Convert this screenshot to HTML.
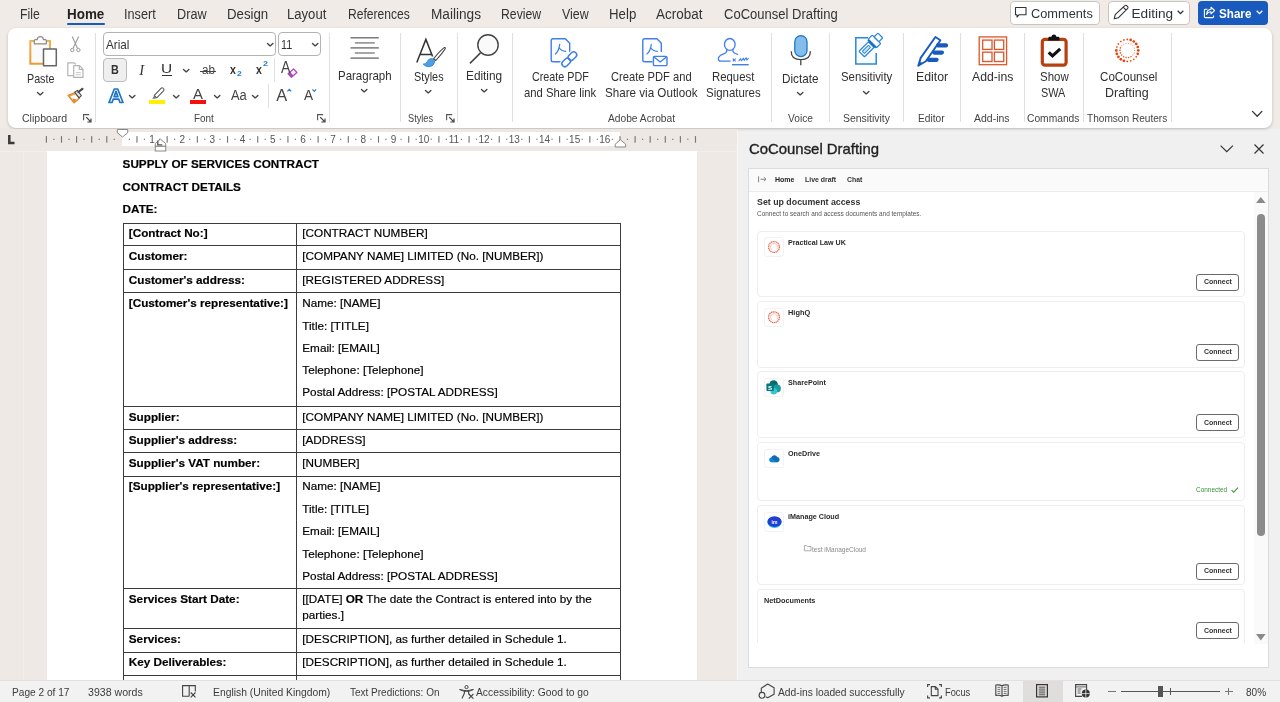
<!DOCTYPE html><html lang="en"><head><meta charset="utf-8"><title>Word - CoCounsel Drafting</title><style>
*{box-sizing:border-box;margin:0;padding:0}
html,body{width:1280px;height:702px;overflow:hidden;background:#f1ebe7;font-family:"Liberation Sans",sans-serif}
#app{position:relative;width:1280px;height:702px;overflow:hidden;will-change:transform}
.t{position:absolute;line-height:20px;height:20px;white-space:nowrap;transform-origin:0 50%;font-family:"Liberation Sans",sans-serif}
.a{position:absolute}
svg{position:absolute;overflow:visible}
.d{position:absolute;white-space:nowrap;font-family:"Liberation Sans",sans-serif;font-size:11.73px;line-height:14px;color:#000;-webkit-text-stroke:0.18px #000}
.b{font-weight:700}
</style></head><body><div id="app">
<div class="a" style="left:0;top:128px;width:738px;height:552px;background:#eee9e4"></div>
<div class="a" style="left:23px;top:128px;width:1px;height:552px;background:#f2eeea"></div>
<div class="a" style="left:47px;top:151.600px;width:649.700px;height:528.400px;background:#fff"></div>
<div class="a" style="left:737px;top:128.500px;width:543px;height:551.500px;background:#f0f0f0;border-left:1px solid #f8f7f6"></div>
<div class="a" style="left:8px;top:28px;width:1264px;height:100px;background:#fff;border-radius:8px;box-shadow:0 1px 3px rgba(0,0,0,.22)"></div>
<div class="a" style="left:0;top:680px;width:1280px;height:22px;background:#f3f2f2;border-top:1px solid #e3e0de"></div>
<div class="a" style="left:67px;top:22.800px;width:38px;height:2.200px;background:#185abd;border-radius:1px"></div>
<div class="a" style="left:1009.5px;top:0.5px;width:90px;height:24px;background:#fff;border:1px solid #c8c6c4;border-radius:4px"></div>
<div class="a" style="left:1107.5px;top:0.5px;width:82px;height:24px;background:#fff;border:1px solid #c8c6c4;border-radius:4px"></div>
<div class="a" style="left:1198px;top:0.5px;width:70px;height:24px;background:#185abd;border-radius:4px"></div>
<svg style="left:1014px;top:6px" width="14" height="13" viewBox="0 0 14 13"><path d="M1.5 1.5h10.5v7.2H5.2L3 11V8.7H1.5z" fill="none" stroke="#333" stroke-width="1.1" stroke-linejoin="round"/></svg>
<svg style="left:1112px;top:4px" width="18" height="17" viewBox="0 0 18 17"><path d="M2.2 14.8l1-4.2L12.6 1.8a1.6 1.6 0 0 1 2.3 0l.6.6a1.6 1.6 0 0 1 0 2.3L6.3 13.8z M11.2 3.2l2.9 2.9" fill="none" stroke="#333" stroke-width="1.1" stroke-linejoin="round"/></svg>
<svg style="left:1176.5px;top:10px" width="7" height="5" viewBox="0 0 7 5"><path d="M.7.8L3.5 3.6 6.3.8" fill="none" stroke="#333" stroke-width="1.3"/></svg>
<svg style="left:1203px;top:6px" width="13" height="13" viewBox="0 0 13 13"><path d="M4.5 3.2H2.3a.9.9 0 0 0-.9.9v6.6c0 .5.4.9.9.9h7.4c.5 0 .9-.4.9-.9V9.4M8 1.2l3.6 3.3L8 7.8V5.7C5.6 5.7 4.5 6.6 3.6 8.4 3.8 5.4 5.300 3.500 8 3.300z" fill="none" stroke="#fff" stroke-width="1.1" stroke-linejoin="round"/></svg>
<svg style="left:1255.5px;top:10px" width="7" height="5" viewBox="0 0 7 5"><path d="M.7.8L3.5 3.6 6.3.8" fill="none" stroke="#fff" stroke-width="1.3"/></svg>
<div class="a" style="left:94.5px;top:33px;width:1px;height:88.6px;background:#e2dfdd"></div>
<div class="a" style="left:328.5px;top:33px;width:1px;height:88.6px;background:#e2dfdd"></div>
<div class="a" style="left:400.2px;top:33px;width:1px;height:88.6px;background:#e2dfdd"></div>
<div class="a" style="left:457.0px;top:33px;width:1px;height:88.6px;background:#e2dfdd"></div>
<div class="a" style="left:511.9px;top:33px;width:1px;height:88.6px;background:#e2dfdd"></div>
<div class="a" style="left:771.1px;top:33px;width:1px;height:88.6px;background:#e2dfdd"></div>
<div class="a" style="left:829.0px;top:33px;width:1px;height:88.6px;background:#e2dfdd"></div>
<div class="a" style="left:902.8px;top:33px;width:1px;height:88.6px;background:#e2dfdd"></div>
<div class="a" style="left:960.3px;top:33px;width:1px;height:88.6px;background:#e2dfdd"></div>
<div class="a" style="left:1023.8px;top:33px;width:1px;height:88.6px;background:#e2dfdd"></div>
<div class="a" style="left:1083.1px;top:33px;width:1px;height:88.6px;background:#e2dfdd"></div>
<div class="a" style="left:1170.9px;top:33px;width:1px;height:88.6px;background:#e2dfdd"></div>
<div class="a" style="left:273.5px;top:58px;width:1px;height:23.599999999999994px;background:#e2dfdd"></div>
<div class="a" style="left:268.2px;top:84px;width:1px;height:23.5px;background:#e2dfdd"></div>
<svg style="left:83px;top:114px" width="9" height="9" viewBox="0 0 9 9"><path d="M0.6 6.2V0.6H6.2" fill="none" stroke="#555" stroke-width="1.1"/><path d="M3.2 3.2L8 8M8 4.4V8H4.4" fill="none" stroke="#444" stroke-width="1.2"/></svg>
<svg style="left:317px;top:114px" width="9" height="9" viewBox="0 0 9 9"><path d="M0.6 6.2V0.6H6.2" fill="none" stroke="#555" stroke-width="1.1"/><path d="M3.2 3.2L8 8M8 4.4V8H4.4" fill="none" stroke="#444" stroke-width="1.2"/></svg>
<svg style="left:446px;top:114px" width="9" height="9" viewBox="0 0 9 9"><path d="M0.6 6.2V0.6H6.2" fill="none" stroke="#555" stroke-width="1.1"/><path d="M3.2 3.2L8 8M8 4.4V8H4.4" fill="none" stroke="#444" stroke-width="1.2"/></svg>
<svg style="left:36.80px;top:92.00px" width="6.4" height="3.4" viewBox="0 0 6.4 3.4"><path d="M0.5 0.4L3.2 2.9L5.9 0.4" fill="none" stroke="#444" stroke-width="1.4" stroke-linejoin="round" stroke-linecap="round"/></svg>
<svg style="left:361.00px;top:88.60px" width="6.4" height="3.4" viewBox="0 0 6.4 3.4"><path d="M0.5 0.4L3.2 2.9L5.9 0.4" fill="none" stroke="#444" stroke-width="1.4" stroke-linejoin="round" stroke-linecap="round"/></svg>
<svg style="left:425.40px;top:90.30px" width="6.4" height="3.4" viewBox="0 0 6.4 3.4"><path d="M0.5 0.4L3.2 2.9L5.9 0.4" fill="none" stroke="#444" stroke-width="1.4" stroke-linejoin="round" stroke-linecap="round"/></svg>
<svg style="left:480.80px;top:88.60px" width="6.4" height="3.4" viewBox="0 0 6.4 3.4"><path d="M0.5 0.4L3.2 2.9L5.9 0.4" fill="none" stroke="#444" stroke-width="1.4" stroke-linejoin="round" stroke-linecap="round"/></svg>
<svg style="left:797.10px;top:92.00px" width="6.4" height="3.4" viewBox="0 0 6.4 3.4"><path d="M0.5 0.4L3.2 2.9L5.9 0.4" fill="none" stroke="#444" stroke-width="1.4" stroke-linejoin="round" stroke-linecap="round"/></svg>
<svg style="left:862.80px;top:90.90px" width="6.4" height="3.4" viewBox="0 0 6.4 3.4"><path d="M0.5 0.4L3.2 2.9L5.9 0.4" fill="none" stroke="#444" stroke-width="1.4" stroke-linejoin="round" stroke-linecap="round"/></svg>
<svg style="left:1252.30px;top:111.40px" width="10.4" height="5.8" viewBox="0 0 10.4 5.8"><path d="M0.5 0.4L5.2 5.3L9.9 0.4" fill="none" stroke="#333" stroke-width="1.3" stroke-linejoin="round" stroke-linecap="round"/></svg>
<div class="a" style="left:103px;top:32.3px;width:172.5px;height:23.5px;background:#fff;border:1px solid #b5b3b1;border-radius:4px"></div>
<div class="a" style="left:278px;top:32.3px;width:43px;height:23.5px;background:#fff;border:1px solid #b5b3b1;border-radius:4px"></div>
<svg style="left:266.80px;top:42.80px" width="6.4" height="3.4" viewBox="0 0 6.4 3.4"><path d="M0.5 0.4L3.2 2.9L5.9 0.4" fill="none" stroke="#444" stroke-width="1.4" stroke-linejoin="round" stroke-linecap="round"/></svg>
<svg style="left:312.20px;top:42.80px" width="6.4" height="3.4" viewBox="0 0 6.4 3.4"><path d="M0.5 0.4L3.2 2.9L5.9 0.4" fill="none" stroke="#444" stroke-width="1.4" stroke-linejoin="round" stroke-linecap="round"/></svg>
<div class="a" style="left:103px;top:58px;width:24.3px;height:23.6px;background:#efefef;border:1px solid #bdbbb9;border-radius:4px"></div>
<div class="a" style="left:162px;top:75px;width:9.5px;height:1.1px;background:#333"></div>
<svg style="left:182.80px;top:68.60px" width="6.4" height="3.4" viewBox="0 0 6.4 3.4"><path d="M0.5 0.4L3.2 2.9L5.9 0.4" fill="none" stroke="#444" stroke-width="1.4" stroke-linejoin="round" stroke-linecap="round"/></svg>
<div class="a" style="left:200px;top:70.6px;width:15.8px;height:1.1px;background:#444"></div>
<svg style="left:287px;top:68.300px" width="11" height="9.900" viewBox="0 0 10 9"><path d="M1 5.2L6 .8l3 3.300L4 8.400z" fill="#fff" stroke="#b146c2" stroke-width="1.2" stroke-linejoin="round"/><path d="M1 5.2l3 3.200 1.800-1.600-3-3.300z" fill="#b146c2"/></svg>
<svg style="left:107.5px;top:88px" width="16" height="15" viewBox="0 0 16 15"><path d="M6.300 1h3.400l5.300 13.500h-3l-1.200-3.300H5.200L4 14.500H1z M6.100 8.700h3.800L8 3.400z" fill="#fff" stroke="#1b73c8" stroke-width="1.7" stroke-linejoin="round" fill-rule="evenodd"/></svg>
<svg style="left:128.80px;top:94.60px" width="6.4" height="3.4" viewBox="0 0 6.4 3.4"><path d="M0.5 0.4L3.2 2.9L5.9 0.4" fill="none" stroke="#444" stroke-width="1.4" stroke-linejoin="round" stroke-linecap="round"/></svg>
<div class="a" style="left:149px;top:100px;width:16.4px;height:4px;background:#ffef00"></div>
<svg style="left:150px;top:87px" width="16" height="13" viewBox="0 0 16 13"><path d="M4.300 8.300L11 1.300a1.500 1.500 0 0 1 2.200 0l.3.300a1.500 1.500 0 0 1 0 2.200L6.800 10.800z" fill="#fff" stroke="#555" stroke-width="1.1"/><path d="M4.300 8.300l2.500 2.500-1.800 1H2.300z" fill="#777"/></svg>
<svg style="left:172.80px;top:94.60px" width="6.4" height="3.4" viewBox="0 0 6.4 3.4"><path d="M0.5 0.4L3.2 2.9L5.9 0.4" fill="none" stroke="#444" stroke-width="1.4" stroke-linejoin="round" stroke-linecap="round"/></svg>
<div class="a" style="left:190px;top:100px;width:16.4px;height:4px;background:#f5100f"></div>
<svg style="left:213.50px;top:94.60px" width="6.4" height="3.4" viewBox="0 0 6.4 3.4"><path d="M0.5 0.4L3.2 2.9L5.9 0.4" fill="none" stroke="#444" stroke-width="1.4" stroke-linejoin="round" stroke-linecap="round"/></svg>
<svg style="left:252.20px;top:94.60px" width="6.4" height="3.4" viewBox="0 0 6.4 3.4"><path d="M0.5 0.4L3.2 2.9L5.9 0.4" fill="none" stroke="#444" stroke-width="1.4" stroke-linejoin="round" stroke-linecap="round"/></svg>
<svg style="left:286.7px;top:88.8px" width="4.600" height="2.800" viewBox="0 0 4.600 2.800"><path d="M.4 2.400l1.900-2 1.900 2" fill="none" stroke="#2b7cd3" stroke-width="1.200"/></svg>
<svg style="left:312.2px;top:88.8px" width="4.600" height="2.800" viewBox="0 0 4.600 2.800"><path d="M.4.400l1.900 2 1.900-2" fill="none" stroke="#2b7cd3" stroke-width="1.2"/></svg>
<svg style="left:0;top:0" width="1280" height="130" viewBox="0 0 1280 130"><defs><linearGradient id="og" x1="0" y1="0" x2="0" y2="1"><stop offset="0" stop-color="#f6b04c"/><stop offset="1" stop-color="#ee9a33"/></linearGradient></defs><path d="M30.300 41h19.700v22.800H30.300z" fill="#fafafa" stroke="url(#og)" stroke-width="2" /><path d="M34.300 43.800v-3.200q0-.900.900-.900h1.900q.4-3 3.200-3t3.200 3h1.900q.9 0 .9.900v3.200z" fill="#fcfcfc" stroke="#8a8a8a" stroke-width="1.2" stroke-linejoin="round"/><path d="M43.500 49h12.800v16.800H43.500z" fill="#fff" stroke="#666" stroke-width="1.5" stroke-linejoin="round"/><path d="M72.200 36.500L77.600 48.400M78.700 36.500L73 48.400" fill="none" stroke="#9a9a9a" stroke-width="1.1" /><circle cx="72.300" cy="50" r="1.700" fill="none" stroke="#9a9a9a" stroke-width="1"/><circle cx="78.400" cy="50" r="1.700" fill="none" stroke="#9a9a9a" stroke-width="1"/><path d="M73.400 75.600H67.800V62.800h6.600l1.500 1.500" fill="none" stroke="#b4b4b4" stroke-width="1.2" stroke-linejoin="round"/><path d="M73.700 65.600h5.800l3.500 3.500v8.300h-9.300z M79.300 65.800v3.500h3.500" fill="#fff" stroke="#b4b4b4" stroke-width="1.2" stroke-linejoin="round"/><path d="M75.800 72.600h5M75.800 74.700h5" fill="none" stroke="#c2c2c2" stroke-width="0.9" /><path d="M68.100 95.300l7-2.600 4.100 5.500-5.100 4.500z" fill="#fff" stroke="#e8821e" stroke-width="1.4" stroke-linejoin="round"/><path d="M68.100 95.300l7-2.600.9 1.200-6.400 2.900z" fill="#f09a3a" stroke="none" stroke-width="1.2" /><path d="M72.300 98.600l4.300 1-2.500 2.500z" fill="#e8821e" stroke="none" stroke-width="1.2" /><path d="M74.600 92.200l2.800-1.800 3.900 5.200-2.200 2.200z" fill="#ececec" stroke="#4a4a4a" stroke-width="1.1" stroke-linejoin="round"/><path d="M78.400 92l4-3.200" fill="none" stroke="#4a4a4a" stroke-width="2.2" stroke-linecap="round"/><path d="M350.500 37.8h28.300" fill="none" stroke="#666" stroke-width="1.3" /><path d="M354.800 42.9h20" fill="none" stroke="#777" stroke-width="1.3" /><path d="M350.500 47.9h28.300" fill="none" stroke="#666" stroke-width="1.3" /><path d="M354.800 53h20" fill="none" stroke="#777" stroke-width="1.3" /><path d="M350.500 58.1h28.300" fill="none" stroke="#666" stroke-width="1.3" /><path d="M416.800 62.600L425.900 39.400L432.600 56.400M420 54.600h11.800" fill="none" stroke="#333" stroke-width="1.5" stroke-linejoin="miter"/><path d="M433.600 58.600q7.500-9 10.600-11 1.300-.5 1.100.9-2 3.600-9.500 12z" fill="#fff" stroke="#444" stroke-width="1.1" stroke-linejoin="round"/><path d="M423.100 64.100q3.200.3 4.200-2.600 1.200-3 4.500-2.900 2.900.5 2.800 3.500-.7 4.200-5.400 4.600-3.500.3-6.100-2.600z" fill="#4e9fe3" stroke="#2b88d8" stroke-width="0.9" /><circle cx="488" cy="45" r="10.200" fill="#fafafa" stroke="#444" stroke-width="1.400"/><path d="M480.500 52.900L469.900 63.400" fill="none" stroke="#444" stroke-width="1.5" /><path d="M553 38.700h12.400l4.300 4.600v8.200M561 61.700H553q-1.800 0-1.800-1.800V40.500q0-1.800 1.800-1.800" fill="none" stroke="#3e7fe8" stroke-width="1.4" stroke-linejoin="round" stroke-linecap="round"/><path d="M555.3 54q3.400-2.400 4.400-9.600M559 47.500q2.200 3.700 6.800 3.800" fill="none" stroke="#3e7fe8" stroke-width="1.2" stroke-linecap="round"/><g transform="rotate(-45 569.300 59.300)" fill="none"><rect x="560.100" y="56.300" width="9.600" height="6" rx="3" stroke="#fff" stroke-width="4"/><rect x="568.900" y="56.300" width="9.600" height="6" rx="3" stroke="#fff" stroke-width="4"/><rect x="560.100" y="56.300" width="9.600" height="6" rx="3" stroke="#3e7fe8" stroke-width="1.500"/><rect x="568.900" y="56.300" width="9.600" height="6" rx="3" stroke="#3e7fe8" stroke-width="1.500"/></g><path d="M644.6 38.700h12.400l4.300 4.600v8.200M652.6 61.700H644.6q-1.800 0-1.800-1.800V40.500q0-1.800 1.800-1.800" fill="none" stroke="#3e7fe8" stroke-width="1.4" stroke-linejoin="round" stroke-linecap="round"/><path d="M646.9 54q3.400-2.400 4.400-9.600M650.6 47.500q2.200 3.700 6.800 3.800" fill="none" stroke="#3e7fe8" stroke-width="1.2" stroke-linecap="round"/><rect x="652.400" y="55.400" width="15.600" height="11.200" rx="1.600" fill="#fff"/><rect x="653.400" y="56.400" width="13.600" height="9.200" rx="1.200" fill="#fff" stroke="#3e7fe8" stroke-width="1.400"/><path d="M654 57l6.200 5 6.200-5" fill="none" stroke="#3e7fe8" stroke-width="1.3" stroke-linejoin="round"/><ellipse cx="729.800" cy="44.400" rx="5.300" ry="5.900" fill="none" stroke="#3e7fe8" stroke-width="1.300"/><path d="M726.800 49.400q.6 3.300-3.600 4.800-4.700 1.700-4.800 4.300-.2 2.600 2.400 2.600h9.400M732.800 49.400q-.3 2.400 1.600 3.600 1.600.9 3.200 1.400" fill="none" stroke="#3e7fe8" stroke-width="1.3" stroke-linecap="round"/><path d="M732.800 58.600l2.800 2.800M735.600 58.600l-2.800 2.800" fill="none" stroke="#3e7fe8" stroke-width="1.1" /><path d="M738.600 61.200l1.900-2.600.9 2.200 1.900-2.600.9 2.200 1.900-2.600.9 2.200 1.500-1.900" fill="none" stroke="#3e7fe8" stroke-width="1.1" stroke-linejoin="round"/><path d="M732 64.700h16.700" fill="none" stroke="#3e7fe8" stroke-width="1.4" /><rect x="794.800" y="35.600" width="12.200" height="21" rx="6.100" fill="#83bdec" stroke="#1f75c8" stroke-width="1.300"/><path d="M791.200 51.200q0 8.500 9.600 8.500t9.600-8.500M800.800 59.700v5.500" fill="none" stroke="#444" stroke-width="1.3" /><path d="M868 37.700h-12.200v26.200h20.400V53" fill="#f7fbfe" stroke="#2b88d8" stroke-width="1.5" stroke-linejoin="miter"/><g transform="rotate(-45 870 45.800)"><rect x="858.300" y="41.900" width="13.400" height="7.800" rx="0.800" fill="#fff" stroke="#2b88d8" stroke-width="1.300"/><rect x="860.700" y="44.300" width="8.600" height="3" rx="0.500" fill="#cfe3f7" stroke="#2b88d8" stroke-width="1"/><rect x="873.400" y="39.800" width="5.800" height="12" rx="0.800" fill="#fff" stroke="#2b88d8" stroke-width="1.300"/><rect x="871.600" y="40.400" width="2" height="10.800" fill="#1b6ec2"/><rect x="879.200" y="42.400" width="5.400" height="6.800" rx="0.800" fill="#fff" stroke="#2b88d8" stroke-width="1.300"/></g><path d="M918.300 65.700l2.400-7.800L935.400 37l5 3.200-14.600 21z" fill="#fff" stroke="#185abd" stroke-width="1.9" stroke-linejoin="round"/><path d="M918.300 65.700l1.300-4.300 2.600 1.900z" fill="#185abd" stroke="#185abd" stroke-width="0.6" /><path d="M938 45.400h8M934.300 52.600h7.600M928.600 59.800h8" fill="none" stroke="#185abd" stroke-width="4.2" stroke-linecap="round"/><rect x="979.200" y="36.900" width="27.400" height="27.800" fill="#fdf6f3" stroke="#d9592c" stroke-width="1.300"/><rect x="982.7" y="40.1" width="9.300" height="9.300" fill="#fff" stroke="#d9592c" stroke-width="1.300"/><rect x="982.7" y="52.2" width="9.300" height="9.300" fill="#fff" stroke="#d9592c" stroke-width="1.300"/><rect x="994.4" y="40.1" width="9.300" height="9.300" fill="#fff" stroke="#d9592c" stroke-width="1.300"/><rect x="994.4" y="52.2" width="9.300" height="9.300" fill="#fff" stroke="#d9592c" stroke-width="1.300"/><rect x="1042.300" y="39.300" width="23.800" height="25.800" rx="2.600" fill="#fff" stroke="#b7410e" stroke-width="3.200"/><path d="M1048.300 40.400v-2.200q0-1.400 1.400-1.400h1.700q.4-2.200 2.500-2.200t2.500 2.200h1.700q1.400 0 1.400 1.400v2.200z" fill="#111" stroke="none" stroke-width="1.2" /><path d="M1048.700 52.300l3.800 3.600 7.700-7" fill="none" stroke="#111" stroke-width="3.1" /><circle cx="1127.30" cy="39.40" r="0.85" fill="#e8400c"/><circle cx="1130.70" cy="39.94" r="1.35" fill="#e8400c"/><circle cx="1133.77" cy="41.50" r="1.35" fill="#e8400c"/><circle cx="1136.20" cy="43.93" r="1.35" fill="#e8400c"/><circle cx="1137.76" cy="47.00" r="1.35" fill="#e8400c"/><circle cx="1138.30" cy="50.40" r="1.35" fill="#e8400c"/><circle cx="1137.76" cy="53.80" r="1.35" fill="#e8400c"/><circle cx="1136.20" cy="56.87" r="0.85" fill="#e8400c"/><circle cx="1133.77" cy="59.30" r="0.85" fill="#e8400c"/><circle cx="1130.70" cy="60.86" r="0.85" fill="#e8400c"/><circle cx="1127.30" cy="61.40" r="0.85" fill="#e8400c"/><circle cx="1123.90" cy="60.86" r="1.35" fill="#e8400c"/><circle cx="1120.83" cy="59.30" r="1.35" fill="#e8400c"/><circle cx="1118.40" cy="56.87" r="1.35" fill="#e8400c"/><circle cx="1116.84" cy="53.80" r="1.35" fill="#e8400c"/><circle cx="1116.30" cy="50.40" r="1.35" fill="#e8400c"/><circle cx="1116.84" cy="47.00" r="0.85" fill="#e8400c"/><circle cx="1118.40" cy="43.93" r="0.85" fill="#e8400c"/><circle cx="1120.83" cy="41.50" r="0.85" fill="#e8400c"/><circle cx="1123.90" cy="39.94" r="0.85" fill="#e8400c"/><circle cx="1134.60" cy="50.40" r="0.5" fill="#ea5a2c"/><circle cx="1134.16" cy="52.90" r="0.5" fill="#ea5a2c"/><circle cx="1132.89" cy="55.09" r="0.5" fill="#ea5a2c"/><circle cx="1130.95" cy="56.72" r="0.8" fill="#ea5a2c"/><circle cx="1128.57" cy="57.59" r="0.8" fill="#ea5a2c"/><circle cx="1126.03" cy="57.59" r="0.8" fill="#ea5a2c"/><circle cx="1123.65" cy="56.72" r="0.8" fill="#ea5a2c"/><circle cx="1121.71" cy="55.09" r="0.8" fill="#ea5a2c"/><circle cx="1120.44" cy="52.90" r="0.8" fill="#ea5a2c"/><circle cx="1120.00" cy="50.40" r="0.8" fill="#ea5a2c"/><circle cx="1120.44" cy="47.90" r="0.8" fill="#ea5a2c"/><circle cx="1121.71" cy="45.71" r="0.5" fill="#ea5a2c"/><circle cx="1123.65" cy="44.08" r="0.5" fill="#ea5a2c"/><circle cx="1126.03" cy="43.21" r="0.5" fill="#ea5a2c"/><circle cx="1128.57" cy="43.21" r="0.5" fill="#ea5a2c"/><circle cx="1130.95" cy="44.08" r="0.5" fill="#ea5a2c"/><circle cx="1132.89" cy="45.71" r="0.5" fill="#ea5a2c"/><circle cx="1134.16" cy="47.90" r="0.5" fill="#ea5a2c"/></svg>
<div class="a" style="left:0;top:128.500px;width:737px;height:22.800px;background:#ede8e3"></div>
<div class="a" style="left:122px;top:131.500px;width:498px;height:14.500px;background:#fff"></div>
<div class="a" style="left:0;top:151px;width:737px;height:1px;background:#f2eeea"></div>
<div class="a" style="left:47px;top:151px;width:649.700px;height:1px;background:#fff"></div>
<svg style="left:7.500px;top:134.600px" width="7" height="9.500" viewBox="0 0 7 9.500"><path d="M1.300 0V8H6.500" fill="none" stroke="#3a3a3a" stroke-width="2.500"/></svg>
<svg style="left:0;top:0" width="738" height="152" viewBox="0 0 738 152"><rect x="113.65" y="138.70000000000002" width="1.2" height="1.2" fill="#777"/><rect x="106.20" y="136.10000000000002" width="1.150" height="6.600" fill="#777"/><rect x="98.56" y="138.70000000000002" width="1.2" height="1.2" fill="#777"/><rect x="91.11" y="136.10000000000002" width="1.150" height="6.600" fill="#777"/><rect x="83.46" y="138.70000000000002" width="1.2" height="1.2" fill="#777"/><rect x="76.01" y="136.10000000000002" width="1.150" height="6.600" fill="#777"/><rect x="68.37" y="138.70000000000002" width="1.2" height="1.2" fill="#777"/><rect x="60.92" y="136.10000000000002" width="1.150" height="6.600" fill="#777"/><rect x="53.27" y="138.70000000000002" width="1.2" height="1.2" fill="#777"/><rect x="45.82" y="136.10000000000002" width="1.150" height="6.600" fill="#777"/><rect x="128.75" y="138.70000000000002" width="1.2" height="1.2" fill="#777"/><rect x="136.40" y="136.10000000000002" width="1.150" height="6.600" fill="#777"/><rect x="143.84" y="138.70000000000002" width="1.2" height="1.2" fill="#777"/><text x="151.99" y="142.8" font-size="10" text-anchor="middle" fill="#555" font-family="Liberation Sans, sans-serif">1</text><rect x="158.94" y="138.70000000000002" width="1.2" height="1.2" fill="#777"/><rect x="166.59" y="136.10000000000002" width="1.150" height="6.600" fill="#777"/><rect x="174.03" y="138.70000000000002" width="1.2" height="1.2" fill="#777"/><text x="182.18" y="142.8" font-size="10" text-anchor="middle" fill="#555" font-family="Liberation Sans, sans-serif">2</text><rect x="189.13" y="138.70000000000002" width="1.2" height="1.2" fill="#777"/><rect x="196.78" y="136.10000000000002" width="1.150" height="6.600" fill="#777"/><rect x="204.22" y="138.70000000000002" width="1.2" height="1.2" fill="#777"/><text x="212.37" y="142.8" font-size="10" text-anchor="middle" fill="#555" font-family="Liberation Sans, sans-serif">3</text><rect x="219.32" y="138.70000000000002" width="1.2" height="1.2" fill="#777"/><rect x="226.97" y="136.10000000000002" width="1.150" height="6.600" fill="#777"/><rect x="234.41" y="138.70000000000002" width="1.2" height="1.2" fill="#777"/><text x="242.56" y="142.8" font-size="10" text-anchor="middle" fill="#555" font-family="Liberation Sans, sans-serif">4</text><rect x="249.51" y="138.70000000000002" width="1.2" height="1.2" fill="#777"/><rect x="257.16" y="136.10000000000002" width="1.150" height="6.600" fill="#777"/><rect x="264.60" y="138.70000000000002" width="1.2" height="1.2" fill="#777"/><text x="272.75" y="142.8" font-size="10" text-anchor="middle" fill="#555" font-family="Liberation Sans, sans-serif">5</text><rect x="279.70" y="138.70000000000002" width="1.2" height="1.2" fill="#777"/><rect x="287.35" y="136.10000000000002" width="1.150" height="6.600" fill="#777"/><rect x="294.79" y="138.70000000000002" width="1.2" height="1.2" fill="#777"/><text x="302.94" y="142.8" font-size="10" text-anchor="middle" fill="#555" font-family="Liberation Sans, sans-serif">6</text><rect x="309.89" y="138.70000000000002" width="1.2" height="1.2" fill="#777"/><rect x="317.54" y="136.10000000000002" width="1.150" height="6.600" fill="#777"/><rect x="324.98" y="138.70000000000002" width="1.2" height="1.2" fill="#777"/><text x="333.13" y="142.8" font-size="10" text-anchor="middle" fill="#555" font-family="Liberation Sans, sans-serif">7</text><rect x="340.08" y="138.70000000000002" width="1.2" height="1.2" fill="#777"/><rect x="347.73" y="136.10000000000002" width="1.150" height="6.600" fill="#777"/><rect x="355.17" y="138.70000000000002" width="1.2" height="1.2" fill="#777"/><text x="363.32" y="142.8" font-size="10" text-anchor="middle" fill="#555" font-family="Liberation Sans, sans-serif">8</text><rect x="370.27" y="138.70000000000002" width="1.2" height="1.2" fill="#777"/><rect x="377.92" y="136.10000000000002" width="1.150" height="6.600" fill="#777"/><rect x="385.36" y="138.70000000000002" width="1.2" height="1.2" fill="#777"/><text x="393.51" y="142.8" font-size="10" text-anchor="middle" fill="#555" font-family="Liberation Sans, sans-serif">9</text><rect x="400.46" y="138.70000000000002" width="1.2" height="1.2" fill="#777"/><rect x="408.11" y="136.10000000000002" width="1.150" height="6.600" fill="#777"/><rect x="415.55" y="138.70000000000002" width="1.2" height="1.2" fill="#777"/><text x="423.70" y="142.8" font-size="10" text-anchor="middle" fill="#555" font-family="Liberation Sans, sans-serif">10</text><rect x="430.65" y="138.70000000000002" width="1.2" height="1.2" fill="#777"/><rect x="438.30" y="136.10000000000002" width="1.150" height="6.600" fill="#777"/><rect x="445.74" y="138.70000000000002" width="1.2" height="1.2" fill="#777"/><text x="453.89" y="142.8" font-size="10" text-anchor="middle" fill="#555" font-family="Liberation Sans, sans-serif">11</text><rect x="460.84" y="138.70000000000002" width="1.2" height="1.2" fill="#777"/><rect x="468.49" y="136.10000000000002" width="1.150" height="6.600" fill="#777"/><rect x="475.93" y="138.70000000000002" width="1.2" height="1.2" fill="#777"/><text x="484.08" y="142.8" font-size="10" text-anchor="middle" fill="#555" font-family="Liberation Sans, sans-serif">12</text><rect x="491.03" y="138.70000000000002" width="1.2" height="1.2" fill="#777"/><rect x="498.68" y="136.10000000000002" width="1.150" height="6.600" fill="#777"/><rect x="506.12" y="138.70000000000002" width="1.2" height="1.2" fill="#777"/><text x="514.27" y="142.8" font-size="10" text-anchor="middle" fill="#555" font-family="Liberation Sans, sans-serif">13</text><rect x="521.22" y="138.70000000000002" width="1.2" height="1.2" fill="#777"/><rect x="528.87" y="136.10000000000002" width="1.150" height="6.600" fill="#777"/><rect x="536.31" y="138.70000000000002" width="1.2" height="1.2" fill="#777"/><text x="544.46" y="142.8" font-size="10" text-anchor="middle" fill="#555" font-family="Liberation Sans, sans-serif">14</text><rect x="551.41" y="138.70000000000002" width="1.2" height="1.2" fill="#777"/><rect x="559.05" y="136.10000000000002" width="1.150" height="6.600" fill="#777"/><rect x="566.50" y="138.70000000000002" width="1.2" height="1.2" fill="#777"/><text x="574.65" y="142.8" font-size="10" text-anchor="middle" fill="#555" font-family="Liberation Sans, sans-serif">15</text><rect x="581.60" y="138.70000000000002" width="1.2" height="1.2" fill="#777"/><rect x="589.25" y="136.10000000000002" width="1.150" height="6.600" fill="#777"/><rect x="596.69" y="138.70000000000002" width="1.2" height="1.2" fill="#777"/><text x="604.84" y="142.8" font-size="10" text-anchor="middle" fill="#555" font-family="Liberation Sans, sans-serif">16</text><rect x="611.79" y="138.70000000000002" width="1.2" height="1.2" fill="#777"/><rect x="619.44" y="136.10000000000002" width="1.150" height="6.600" fill="#777"/><rect x="626.88" y="138.70000000000002" width="1.2" height="1.2" fill="#777"/><rect x="634.53" y="136.10000000000002" width="1.150" height="6.600" fill="#777"/><rect x="641.98" y="138.70000000000002" width="1.2" height="1.2" fill="#777"/><rect x="649.62" y="136.10000000000002" width="1.150" height="6.600" fill="#777"/><rect x="657.07" y="138.70000000000002" width="1.2" height="1.2" fill="#777"/><rect x="664.72" y="136.10000000000002" width="1.150" height="6.600" fill="#777"/><rect x="672.17" y="138.70000000000002" width="1.2" height="1.2" fill="#777"/><rect x="679.81" y="136.10000000000002" width="1.150" height="6.600" fill="#777"/><rect x="687.26" y="138.70000000000002" width="1.2" height="1.2" fill="#777"/><rect x="694.91" y="136.10000000000002" width="1.150" height="6.600" fill="#777"/><path d="M117.300 129.500h10.400v3.200l-5.200 4.300-5.200-4.300z" fill="#fff" stroke="#8a8886" stroke-width="1"/><path d="M155.300 146.300v-2.800l5.200-4.300 5.200 4.300v2.800z" fill="#fff" stroke="#8a8886" stroke-width="1"/><rect x="155.300" y="146.300" width="10.400" height="4.700" fill="#fff" stroke="#8a8886" stroke-width="1"/><path d="M157.800 140.500v4.300h4.500" fill="none" stroke="#555" stroke-width="1.3"/><path d="M615.200 147v-2.900l5.200-4.300 5.200 4.300v2.900z" fill="#fff" stroke="#8a8886" stroke-width="1"/></svg>
<div class="d b" style="left:122.6px;top:157.10px">SUPPLY OF SERVICES CONTRACT</div>
<div class="d b" style="left:122.6px;top:179.60px">CONTRACT DETAILS</div>
<div class="d b" style="left:122.6px;top:202.00px">DATE:</div>
<div class="d b" style="left:128.8px;top:226.00px">[Contract No:]</div>
<div class="d" style="left:302.3px;top:226.00px">[CONTRACT NUMBER]</div>
<div class="d b" style="left:128.8px;top:249.40px">Customer:</div>
<div class="d" style="left:302.3px;top:249.40px">[COMPANY NAME] LIMITED (No. [NUMBER])</div>
<div class="d b" style="left:128.8px;top:272.60px">Customer&#x27;s address:</div>
<div class="d" style="left:302.3px;top:272.60px">[REGISTERED ADDRESS]</div>
<div class="d b" style="left:128.8px;top:296.10px">[Customer&#x27;s representative:]</div>
<div class="d" style="left:302.3px;top:296.10px">Name: [NAME]</div>
<div class="d" style="left:302.3px;top:318.60px">Title: [TITLE]</div>
<div class="d" style="left:302.3px;top:340.70px">Email: [EMAIL]</div>
<div class="d" style="left:302.3px;top:363.00px">Telephone: [Telephone]</div>
<div class="d" style="left:302.3px;top:385.20px">Postal Address: [POSTAL ADDRESS]</div>
<div class="d b" style="left:128.8px;top:409.50px">Supplier:</div>
<div class="d" style="left:302.3px;top:409.50px">[COMPANY NAME] LIMITED (No. [NUMBER])</div>
<div class="d b" style="left:128.8px;top:432.60px">Supplier&#x27;s address:</div>
<div class="d" style="left:302.3px;top:432.60px">[ADDRESS]</div>
<div class="d b" style="left:128.8px;top:456.20px">Supplier&#x27;s VAT number:</div>
<div class="d" style="left:302.3px;top:456.20px">[NUMBER]</div>
<div class="d b" style="left:128.8px;top:479.40px">[Supplier&#x27;s representative:]</div>
<div class="d" style="left:302.3px;top:479.40px">Name: [NAME]</div>
<div class="d" style="left:302.3px;top:501.90px">Title: [TITLE]</div>
<div class="d" style="left:302.3px;top:524.40px">Email: [EMAIL]</div>
<div class="d" style="left:302.3px;top:546.60px">Telephone: [Telephone]</div>
<div class="d" style="left:302.3px;top:568.60px">Postal Address: [POSTAL ADDRESS]</div>
<div class="d b" style="left:128.8px;top:592.00px">Services Start Date:</div>
<div class="d b" style="left:128.8px;top:632.00px">Services:</div>
<div class="d" style="left:302.3px;top:632.00px">[DESCRIPTION], as further detailed in Schedule 1.</div>
<div class="d b" style="left:128.8px;top:655.30px">Key Deliverables:</div>
<div class="d" style="left:302.3px;top:655.30px">[DESCRIPTION], as further detailed in Schedule 1.</div>
<div class="d" style="left:302.3px;top:592.00px">[[DATE] <b>OR</b> The date the Contract is entered into by the</div>
<div class="d" style="left:302.3px;top:607.80px">parties.]</div>
<div class="a" style="left:122.500px;top:222.5px;width:498.500px;height:1px;background:#3c3c3c"></div>
<div class="a" style="left:122.500px;top:245.4px;width:498.500px;height:1px;background:#3c3c3c"></div>
<div class="a" style="left:122.500px;top:268.8px;width:498.500px;height:1px;background:#3c3c3c"></div>
<div class="a" style="left:122.500px;top:292.1px;width:498.500px;height:1px;background:#3c3c3c"></div>
<div class="a" style="left:122.500px;top:405.7px;width:498.500px;height:1px;background:#3c3c3c"></div>
<div class="a" style="left:122.500px;top:428.8px;width:498.500px;height:1px;background:#3c3c3c"></div>
<div class="a" style="left:122.500px;top:452.1px;width:498.500px;height:1px;background:#3c3c3c"></div>
<div class="a" style="left:122.500px;top:475.6px;width:498.500px;height:1px;background:#3c3c3c"></div>
<div class="a" style="left:122.500px;top:587.8px;width:498.500px;height:1px;background:#3c3c3c"></div>
<div class="a" style="left:122.500px;top:627.8px;width:498.500px;height:1px;background:#3c3c3c"></div>
<div class="a" style="left:122.500px;top:651.9px;width:498.500px;height:1px;background:#3c3c3c"></div>
<div class="a" style="left:122.500px;top:674.5px;width:498.500px;height:1px;background:#3c3c3c"></div>
<div class="a" style="left:122.5px;top:222.500px;width:1px;height:457.500px;background:#3c3c3c"></div>
<div class="a" style="left:296.1px;top:222.500px;width:1px;height:457.500px;background:#3c3c3c"></div>
<div class="a" style="left:620.0px;top:222.500px;width:1px;height:457.500px;background:#3c3c3c"></div>
<svg style="left:1219.500px;top:145.200px" width="13.500" height="7.500" viewBox="0 0 13.500 7.500"><path d="M.6.600l6.150 6.100L12.900.600" fill="none" stroke="#333" stroke-width="1.200"/></svg>
<svg style="left:1253.700px;top:144px" width="10" height="10" viewBox="0 0 10 10"><path d="M.5.500l9 9M9.500.500l-9 9" fill="none" stroke="#333" stroke-width="1.200"/></svg>
<div class="a" style="left:748px;top:168px;width:520.500px;height:499.600px;background:#fff;border:1px solid #dcdcdc"></div>
<div class="a" style="left:749px;top:169px;width:518.500px;height:22.500px;background:#fafafa;border-bottom:1px solid #ececec"></div>
<svg style="left:758px;top:176px" width="8.500" height="6.500" viewBox="0 0 8.500 6.500"><path d="M.6.300v5.900M2.500 3.250h5.400M5.900 1.200l2.100 2.050-2.100 2.050" fill="none" stroke="#777" stroke-width="0.9"/></svg>
<div class="a" style="left:1253.500px;top:192px;width:14px;height:451.600px;background:#fafafa"></div>
<svg style="left:1256.200px;top:196.500px" width="9.600" height="6" viewBox="0 0 9.600 6"><path d="M0 6L4.800 0 9.600 6z" fill="#8a8a8a"/></svg>
<div class="a" style="left:1256.800px;top:214px;width:8.400px;height:321.800px;background:#8c8c8c;border-radius:4.200px"></div>
<svg style="left:1256.200px;top:633.800px" width="9.600" height="6.400" viewBox="0 0 9.600 6.400"><path d="M0 0L4.800 6.400 9.600 0z" fill="#8a8a8a"/></svg>
<div class="a" style="left:757.200px;top:230.7px;width:488px;height:66.1px;background:#fff;border:1px solid #eeeeee;border-radius:4px"></div>
<div class="a" style="left:764.200px;top:237.2px;width:19.400px;height:19.400px;background:#fff;border:1px solid #f2f2f2;border-radius:3px"></div>
<svg style="left:0;top:0" width="1280" height="702" viewBox="0 0 1280 702"><circle cx="774" cy="247" r="5.400" fill="none" stroke="#ec6248" stroke-width="1.250" stroke-dasharray="1.300 0.500"/><path d="M771.8 249.6a3.400 3.400 0 1 1 4.800-.4" fill="none" stroke="#f08a74" stroke-width=".8" stroke-dasharray=".9 .5"/></svg>
<div class="a" style="left:1196.200px;top:273.5px;width:42.600px;height:17px;background:#fff;border:1px solid #6a6a6a;border-radius:3px"></div>
<div class="a" style="left:757.200px;top:300.9px;width:488px;height:66.9px;background:#fff;border:1px solid #eeeeee;border-radius:4px"></div>
<div class="a" style="left:764.200px;top:307.8px;width:19.400px;height:19.400px;background:#fff;border:1px solid #f2f2f2;border-radius:3px"></div>
<svg style="left:0;top:0" width="1280" height="702" viewBox="0 0 1280 702"><circle cx="774" cy="317.2" r="5.400" fill="none" stroke="#ec6248" stroke-width="1.250" stroke-dasharray="1.300 0.500"/><path d="M771.8 319.8a3.400 3.400 0 1 1 4.800-.4" fill="none" stroke="#f08a74" stroke-width=".8" stroke-dasharray=".9 .5"/></svg>
<div class="a" style="left:1196.200px;top:343.7px;width:42.600px;height:17px;background:#fff;border:1px solid #6a6a6a;border-radius:3px"></div>
<div class="a" style="left:757.200px;top:370.9px;width:488px;height:67.2px;background:#fff;border:1px solid #eeeeee;border-radius:4px"></div>
<div class="a" style="left:764.200px;top:378px;width:19.400px;height:19.400px;background:#fff;border:1px solid #f2f2f2;border-radius:3px"></div>
<div class="a" style="left:1196.200px;top:414px;width:42.600px;height:17px;background:#fff;border:1px solid #6a6a6a;border-radius:3px"></div>
<svg style="left:766.300px;top:380px" width="15.400" height="15" viewBox="0 0 15.400 15"><circle cx="7.600" cy="4.600" r="4.300" fill="#036c70"/><circle cx="11" cy="8.400" r="3.900" fill="#1a9ba1"/><circle cx="7.800" cy="11.300" r="3.300" fill="#37c6d0"/><rect x="0.400" y="3.600" width="7.400" height="7.400" rx="0.800" fill="#03787c"/><text x="4.100" y="9.600" font-size="6.200" font-weight="700" fill="#fff" text-anchor="middle" font-family="Liberation Sans, sans-serif">S</text></svg>
<div class="a" style="left:757.200px;top:441.8px;width:488px;height:59.2px;background:#fff;border:1px solid #eeeeee;border-radius:4px"></div>
<div class="a" style="left:764.200px;top:449px;width:19.400px;height:19.400px;background:#fff;border:1px solid #f2f2f2;border-radius:3px"></div>
<svg style="left:768.500px;top:454.500px" width="11" height="7.500" viewBox="0 0 11 7.500"><path d="M2.600 7.300a2.400 2.400 0 0 1-.4-4.750A3.300 3.300 0 0 1 8.300 2a2.700 2.700 0 0 1 .3 5.300z" fill="#0f6cbd"/><path d="M2.600 7.300a2.400 2.400 0 0 1-.9-4.600l6 4.600z" fill="#1490df" opacity=".7"/></svg>
<svg style="left:1231px;top:486.500px" width="7.500" height="6" viewBox="0 0 7.500 6"><path d="M.6 3.200l2.100 2.100L6.900.600" fill="none" stroke="#3a8f3a" stroke-width="1.100"/></svg>
<div class="a" style="left:757.200px;top:505.1px;width:488px;height:80.1px;background:#fff;border:1px solid #eeeeee;border-radius:4px"></div>
<div class="a" style="left:764.200px;top:512.2px;width:19.400px;height:19.400px;background:#fff;border:1px solid #f2f2f2;border-radius:3px"></div>
<div class="a" style="left:1196.200px;top:562.5px;width:42.600px;height:17px;background:#fff;border:1px solid #6a6a6a;border-radius:3px"></div>
<svg style="left:766.500px;top:516.400px" width="15" height="12" viewBox="0 0 15 12"><ellipse cx="7.500" cy="6.300" rx="7.200" ry="5.600" fill="#27c1f0"/><ellipse cx="7.500" cy="5.600" rx="7" ry="5.300" fill="#1f3fd6"/><text x="7.500" y="7.600" font-size="5" font-weight="700" fill="#fff" text-anchor="middle" font-family="Liberation Sans, sans-serif">im</text></svg>
<svg style="left:804px;top:545.300px" width="7.400" height="6.400" viewBox="0 0 7.400 6.400"><path d="M.4 5.800V.6h2.400l.8.900h3.400v4.300z" fill="none" stroke="#8a8a8a" stroke-width="0.700"/></svg>
<div class="a" style="left:757.200px;top:588.9px;width:488px;height:54.6px;background:#fff;border:1px solid #eeeeee;border-bottom:none;border-radius:4px 4px 0 0"></div>
<div class="a" style="left:1196.200px;top:622.3px;width:42.600px;height:17px;background:#fff;border:1px solid #6a6a6a;border-radius:3px"></div>
<div class="a" style="left:749.500px;top:643.600px;width:517.500px;height:22.500px;background:#fff"></div>
<svg style="left:182.300px;top:685.300px" width="14" height="13" viewBox="0 0 14 13"><path d="M7.200 11.200H.600V.600h12.700v5.800M7.200.600v10.600" fill="none" stroke="#444" stroke-width="1.100"/><path d="M8.700 7.500l4.800 4.800M13.500 7.500l-4.800 4.800" fill="none" stroke="#444" stroke-width="1.100"/></svg>
<svg style="left:458.500px;top:684.600px" width="15.500" height="14" viewBox="0 0 15.500 14"><circle cx="7.500" cy="2.100" r="1.600" fill="none" stroke="#444" stroke-width="1"/><path d="M.8 4.600q6.700 2.200 13.400 0M5.400 5.700v2.600L3.200 13M9.600 5.700v2.600l.8 1.500" fill="none" stroke="#444" stroke-width="1.100" stroke-linecap="round" stroke-linejoin="round"/><path d="M.8 4.600q6.700 3.800 13.400 0" fill="none" stroke="#444" stroke-width=".9"/><path d="M9.800 9l4.600 4.600M14.400 9l-4.600 4.600" fill="none" stroke="#444" stroke-width="1.100"/></svg>
<svg style="left:758px;top:683px" width="17.500" height="16" viewBox="0 0 17.500 16"><path d="M3.300 9.400V5.200L9.700 1l6.400 3.800v6.400l-6.400 3.600-2-1.100" fill="none" stroke="#444" stroke-width="1.100" stroke-linejoin="round"/><circle cx="4" cy="12.300" r="2.900" fill="none" stroke="#444" stroke-width="1.100"/></svg>
<svg style="left:927px;top:684px" width="15" height="14.500" viewBox="0 0 15 14.500"><path d="M.6 3V.600H3M12 .600h2.400V3M14.400 11.500v2.400H12M3 13.900H.600v-2.400" fill="none" stroke="#444" stroke-width="1.100"/><path d="M4.300 2.600h4.200l2.500 2.500v6.500H4.300z M8.300 2.800v2.500h2.500" fill="none" stroke="#444" stroke-width="1.100" stroke-linejoin="round"/></svg>
<svg style="left:995px;top:684px" width="14" height="13" viewBox="0 0 14 13"><path d="M7 1.800C5.600.900 3.500.700.800 1v10.400c2.700-.3 4.800-.1 6.200.800 1.400-.9 3.500-1.100 6.200-.8V1C10.500.700 8.400.900 7 1.800zM7 1.800v10.400" fill="none" stroke="#444" stroke-width="1.100" stroke-linejoin="round"/><path d="M2.500 3.400h2.800M2.500 5.400h2.800M2.500 7.400h2.800M2.500 9.400h2.800M8.700 3.400h2.800M8.700 5.400h2.800M8.700 7.400h2.800M8.700 9.400h2.800" stroke="#555" stroke-width=".8"/></svg>
<div class="a" style="left:1022.500px;top:680.500px;width:40px;height:21.500px;background:#e0dedc"></div>
<svg style="left:1036px;top:684px" width="12" height="13.500" viewBox="0 0 12 13.500"><rect x=".6" y=".6" width="10.800" height="12.300" fill="none" stroke="#333" stroke-width="1.200"/><path d="M2.800 3.200h6.400M2.800 5.100h6.400M2.800 7h6.400M2.800 8.900h6.400M2.800 10.800h6.400" stroke="#444" stroke-width=".9"/></svg>
<svg style="left:1075px;top:684px" width="15.500" height="14" viewBox="0 0 15.500 14"><path d="M7 12.400H.600V.600h11V6" fill="none" stroke="#444" stroke-width="1.100"/><path d="M.6 2.900h11M2.600 5h4M2.600 7h3M2.600 9h3" stroke="#555" stroke-width=".9"/><circle cx="10.800" cy="9.600" r="4" fill="#333"/><path d="M6.800 9.600h8M10.800 5.600v8" stroke="#fff" stroke-width=".7"/></svg>
<div class="a" style="left:1108px;top:690.800px;width:7.500px;height:1px;background:#777"></div>
<div class="a" style="left:1121px;top:690.800px;width:99px;height:1px;background:#555"></div>
<div class="a" style="left:1158px;top:685.500px;width:5px;height:11.500px;background:#555"></div>
<div class="a" style="left:1170.200px;top:688px;width:1px;height:6.500px;background:#555"></div>
<div class="a" style="left:1225px;top:690.800px;width:7.500px;height:1px;background:#777"></div>
<div class="a" style="left:1228.250px;top:687.600px;width:1px;height:7.500px;background:#777"></div>
<span class="t" style="left:20.13px;top:4.10px;font-size:14px;color:#333;transform:scaleX(0.8727);">File</span>
<span class="t" style="left:124.09px;top:4.10px;font-size:14px;color:#333;transform:scaleX(0.9085);">Insert</span>
<span class="t" style="left:176.59px;top:4.10px;font-size:14px;color:#333;transform:scaleX(0.9061);">Draw</span>
<span class="t" style="left:226.55px;top:4.10px;font-size:14px;color:#333;transform:scaleX(0.9451);">Design</span>
<span class="t" style="left:286.56px;top:4.10px;font-size:14px;color:#333;transform:scaleX(0.9357);">Layout</span>
<span class="t" style="left:348.14px;top:4.10px;font-size:14px;color:#333;transform:scaleX(0.8641);">References</span>
<span class="t" style="left:430.53px;top:4.10px;font-size:14px;color:#333;transform:scaleX(0.9732);">Mailings</span>
<span class="t" style="left:500.63px;top:4.10px;font-size:14px;color:#333;transform:scaleX(0.8735);">Review</span>
<span class="t" style="left:562.00px;top:4.10px;font-size:14px;color:#333;transform:scaleX(0.8876);">View</span>
<span class="t" style="left:608.55px;top:4.10px;font-size:14px;color:#333;transform:scaleX(0.9462);">Help</span>
<span class="t" style="left:656.00px;top:4.10px;font-size:14px;color:#333;transform:scaleX(0.9616);">Acrobat</span>
<span class="t" style="left:724.00px;top:4.10px;font-size:14px;color:#333;transform:scaleX(0.9309);">CoCounsel Drafting</span>
<span class="t" style="left:67.00px;top:4.10px;font-size:14px;color:#222;font-weight:700;transform:scaleX(0.9588);">Home</span>
<span class="t" style="left:1030.50px;top:3.60px;font-size:13.6px;color:#333;transform:scaleX(0.9405);">Comments</span>
<span class="t" style="left:1131.50px;top:3.60px;font-size:13.6px;color:#333;">Editing</span>
<span class="t" style="left:1219.00px;top:3.60px;font-size:13.4px;color:#fff;font-weight:700;transform:scaleX(0.8703);">Share</span>
<span class="t" style="left:22.30px;top:108.20px;font-size:11.6px;color:#444;transform:scaleX(0.9090);">Clipboard</span>
<span class="t" style="left:193.50px;top:108.20px;font-size:11.6px;color:#444;transform:scaleX(0.8550);">Font</span>
<span class="t" style="left:407.80px;top:108.20px;font-size:11.6px;color:#444;transform:scaleX(0.7931);">Styles</span>
<span class="t" style="left:607.50px;top:108.20px;font-size:11.6px;color:#444;transform:scaleX(0.8815);">Adobe Acrobat</span>
<span class="t" style="left:788.00px;top:108.20px;font-size:11.6px;color:#444;transform:scaleX(0.8777);">Voice</span>
<span class="t" style="left:842.60px;top:108.20px;font-size:11.6px;color:#444;transform:scaleX(0.8990);">Sensitivity</span>
<span class="t" style="left:918.20px;top:108.20px;font-size:11.6px;color:#444;transform:scaleX(0.8776);">Editor</span>
<span class="t" style="left:974.30px;top:108.20px;font-size:11.6px;color:#444;transform:scaleX(0.9035);">Add-ins</span>
<span class="t" style="left:1026.70px;top:108.20px;font-size:11.6px;color:#444;transform:scaleX(0.8843);">Commands</span>
<span class="t" style="left:1086.60px;top:108.20px;font-size:11.6px;color:#444;transform:scaleX(0.8706);">Thomson Reuters</span>
<span class="t" style="left:26.54px;top:68.50px;font-size:12.4px;color:#303030;transform:scaleX(0.8638);">Paste</span>
<span class="t" style="left:337.57px;top:65.60px;font-size:12.4px;color:#303030;transform:scaleX(0.9268);">Paragraph</span>
<span class="t" style="left:414.00px;top:67.20px;font-size:12.4px;color:#303030;transform:scaleX(0.8764);">Styles</span>
<span class="t" style="left:466.35px;top:65.60px;font-size:12.4px;color:#303030;transform:scaleX(0.9542);">Editing</span>
<span class="t" style="left:531.60px;top:67.40px;font-size:12.4px;color:#303030;transform:scaleX(0.8687);">Create PDF</span>
<span class="t" style="left:523.80px;top:83.40px;font-size:12.4px;color:#303030;transform:scaleX(0.9110);">and Share link</span>
<span class="t" style="left:610.80px;top:67.40px;font-size:12.4px;color:#303030;transform:scaleX(0.9003);">Create PDF and</span>
<span class="t" style="left:604.80px;top:83.40px;font-size:12.4px;color:#303030;transform:scaleX(0.9386);">Share via Outlook</span>
<span class="t" style="left:712.08px;top:67.40px;font-size:12.4px;color:#303030;transform:scaleX(0.9167);">Request</span>
<span class="t" style="left:706.30px;top:83.40px;font-size:12.4px;color:#303030;transform:scaleX(0.9231);">Signatures</span>
<span class="t" style="left:782.46px;top:68.50px;font-size:12.4px;color:#303030;transform:scaleX(0.9450);">Dictate</span>
<span class="t" style="left:840.80px;top:67.40px;font-size:12.4px;color:#303030;transform:scaleX(0.9190);">Sensitivity</span>
<span class="t" style="left:916.01px;top:67.40px;font-size:12.4px;color:#303030;transform:scaleX(0.9923);">Editor</span>
<span class="t" style="left:972.30px;top:67.40px;font-size:12.4px;color:#303030;transform:scaleX(0.9853);">Add-ins</span>
<span class="t" style="left:1039.70px;top:67.40px;font-size:12.4px;color:#303030;transform:scaleX(0.9244);">Show</span>
<span class="t" style="left:1041.30px;top:83.40px;font-size:12.4px;color:#303030;transform:scaleX(0.8772);">SWA</span>
<span class="t" style="left:1099.60px;top:67.40px;font-size:12.4px;color:#303030;transform:scaleX(0.9365);">CoCounsel</span>
<span class="t" style="left:1105.30px;top:83.40px;font-size:12.4px;color:#303030;transform:scaleX(1.0048);">Drafting</span>
<span class="t" style="left:105.80px;top:35.10px;font-size:12.6px;color:#333;transform:scaleX(0.9305);">Arial</span>
<span class="t" style="left:280.80px;top:35.10px;font-size:12.6px;color:#333;transform:scaleX(0.8570);">11</span>
<span class="t" style="left:111.00px;top:59.50px;font-size:13.5px;color:#333;font-weight:700;transform:scaleX(0.8000);">B</span>
<span class="t" style="left:138.60px;top:59.50px;font-size:14.5px;color:#333;font-family:'Liberation Serif',serif;font-style:italic;left:139.3px;font-weight:400;">I</span>
<span class="t" style="left:160.81px;top:58.60px;font-size:13px;color:#333;transform:scaleX(1.1875);">U</span>
<span class="t" style="left:201.50px;top:60.00px;font-size:12.5px;color:#444;transform:scaleX(0.9318);">ab</span>
<span class="t" style="left:230.00px;top:60.00px;font-size:13px;color:#333;font-weight:700;transform:scaleX(0.8125);">x</span>
<span class="t" style="left:237.00px;top:64.30px;font-size:7.5px;color:#2b7cd3;font-weight:700;transform:scaleX(1.1500);">2</span>
<span class="t" style="left:256.00px;top:60.00px;font-size:13px;color:#333;font-weight:700;transform:scaleX(0.8125);">x</span>
<span class="t" style="left:263.00px;top:54.30px;font-size:7.5px;color:#2b7cd3;font-weight:700;transform:scaleX(1.2000);">2</span>
<span class="t" style="left:280.80px;top:58.20px;font-size:15.6px;color:#444;transform:scaleX(0.9091);">A</span>
<span class="t" style="left:193.20px;top:83.80px;font-size:14.6px;color:#444;transform:scaleX(1.0200);">A</span>
<span class="t" style="left:231.00px;top:85.20px;font-size:14px;color:#444;transform:scaleX(0.9228);">Aa</span>
<span class="t" style="left:276.30px;top:84.60px;font-size:16.4px;color:#444;">A</span>
<span class="t" style="left:304.00px;top:85.30px;font-size:14.3px;color:#444;transform:scaleX(0.9500);">A</span>
<span class="t" style="left:749.00px;top:138.90px;font-size:14.4px;color:#1f1f1f;transform:scaleX(1.0352);-webkit-text-stroke:0.35px #1f1f1f;">CoCounsel Drafting</span>
<span class="t" style="left:775.20px;top:170.00px;font-size:7.8px;color:#222;font-weight:700;transform:scaleX(0.8958);">Home</span>
<span class="t" style="left:805.20px;top:170.00px;font-size:7.8px;color:#333;font-weight:700;transform:scaleX(0.8874);">Live draft</span>
<span class="t" style="left:846.50px;top:170.00px;font-size:7.8px;color:#333;font-weight:700;transform:scaleX(0.8855);">Chat</span>
<span class="t" style="left:757.20px;top:191.60px;font-size:9.6px;color:#333;font-weight:700;transform:scaleX(0.9183);">Set up document access</span>
<span class="t" style="left:757.20px;top:203.80px;font-size:6.6px;color:#555;transform:scaleX(0.9789);">Connect to search and access documents and templates.</span>
<span class="t" style="left:1203.70px;top:272.10px;font-size:7.6px;color:#333;font-weight:700;transform:scaleX(0.9175);">Connect</span>
<span class="t" style="left:787.70px;top:233.00px;font-size:7.6px;color:#2a2a2a;font-weight:700;transform:scaleX(0.9383);">Practical Law UK</span>
<span class="t" style="left:1203.70px;top:342.30px;font-size:7.6px;color:#333;font-weight:700;transform:scaleX(0.9175);">Connect</span>
<span class="t" style="left:787.70px;top:303.20px;font-size:7.6px;color:#2a2a2a;font-weight:700;transform:scaleX(0.9750);">HighQ</span>
<span class="t" style="left:1203.70px;top:412.60px;font-size:7.6px;color:#333;font-weight:700;transform:scaleX(0.9175);">Connect</span>
<span class="t" style="left:787.70px;top:373.40px;font-size:7.6px;color:#2a2a2a;font-weight:700;transform:scaleX(0.9443);">SharePoint</span>
<span class="t" style="left:787.70px;top:444.20px;font-size:7.6px;color:#2a2a2a;font-weight:700;transform:scaleX(0.9481);">OneDrive</span>
<span class="t" style="left:1196.00px;top:479.80px;font-size:6.5px;color:#3a8f3a;transform:scaleX(0.9898);">Connected</span>
<span class="t" style="left:1203.70px;top:561.10px;font-size:7.6px;color:#333;font-weight:700;transform:scaleX(0.9175);">Connect</span>
<span class="t" style="left:787.70px;top:507.40px;font-size:7.6px;color:#2a2a2a;font-weight:700;transform:scaleX(0.9473);">iManage Cloud</span>
<span class="t" style="left:812.20px;top:539.60px;font-size:6.5px;color:#8a8a8a;transform:scaleX(0.9948);">test iManageCloud</span>
<span class="t" style="left:1203.70px;top:620.90px;font-size:7.6px;color:#333;font-weight:700;transform:scaleX(0.9175);">Connect</span>
<span class="t" style="left:764.00px;top:591.10px;font-size:7.6px;color:#2a2a2a;font-weight:700;transform:scaleX(0.9595);">NetDocuments</span>
<span class="t" style="left:11.50px;top:681.70px;font-size:11.4px;color:#3b3b3b;transform:scaleX(0.8901);">Page 2 of 17</span>
<span class="t" style="left:87.50px;top:681.70px;font-size:11.4px;color:#3b3b3b;transform:scaleX(0.9292);">3938 words</span>
<span class="t" style="left:213.00px;top:681.70px;font-size:11.4px;color:#3b3b3b;transform:scaleX(0.9083);">English (United Kingdom)</span>
<span class="t" style="left:349.50px;top:681.70px;font-size:11.4px;color:#3b3b3b;transform:scaleX(0.8780);">Text Predictions: On</span>
<span class="t" style="left:476.20px;top:681.70px;font-size:11.4px;color:#3b3b3b;transform:scaleX(0.9044);">Accessibility: Good to go</span>
<span class="t" style="left:777.50px;top:681.70px;font-size:11.4px;color:#3b3b3b;transform:scaleX(0.9016);">Add-ins loaded successfully</span>
<span class="t" style="left:945.00px;top:681.70px;font-size:11.4px;color:#3b3b3b;transform:scaleX(0.8141);">Focus</span>
<span class="t" style="left:1245.50px;top:681.70px;font-size:11.4px;color:#3b3b3b;transform:scaleX(0.8822);">80%</span>
</div></body></html>
